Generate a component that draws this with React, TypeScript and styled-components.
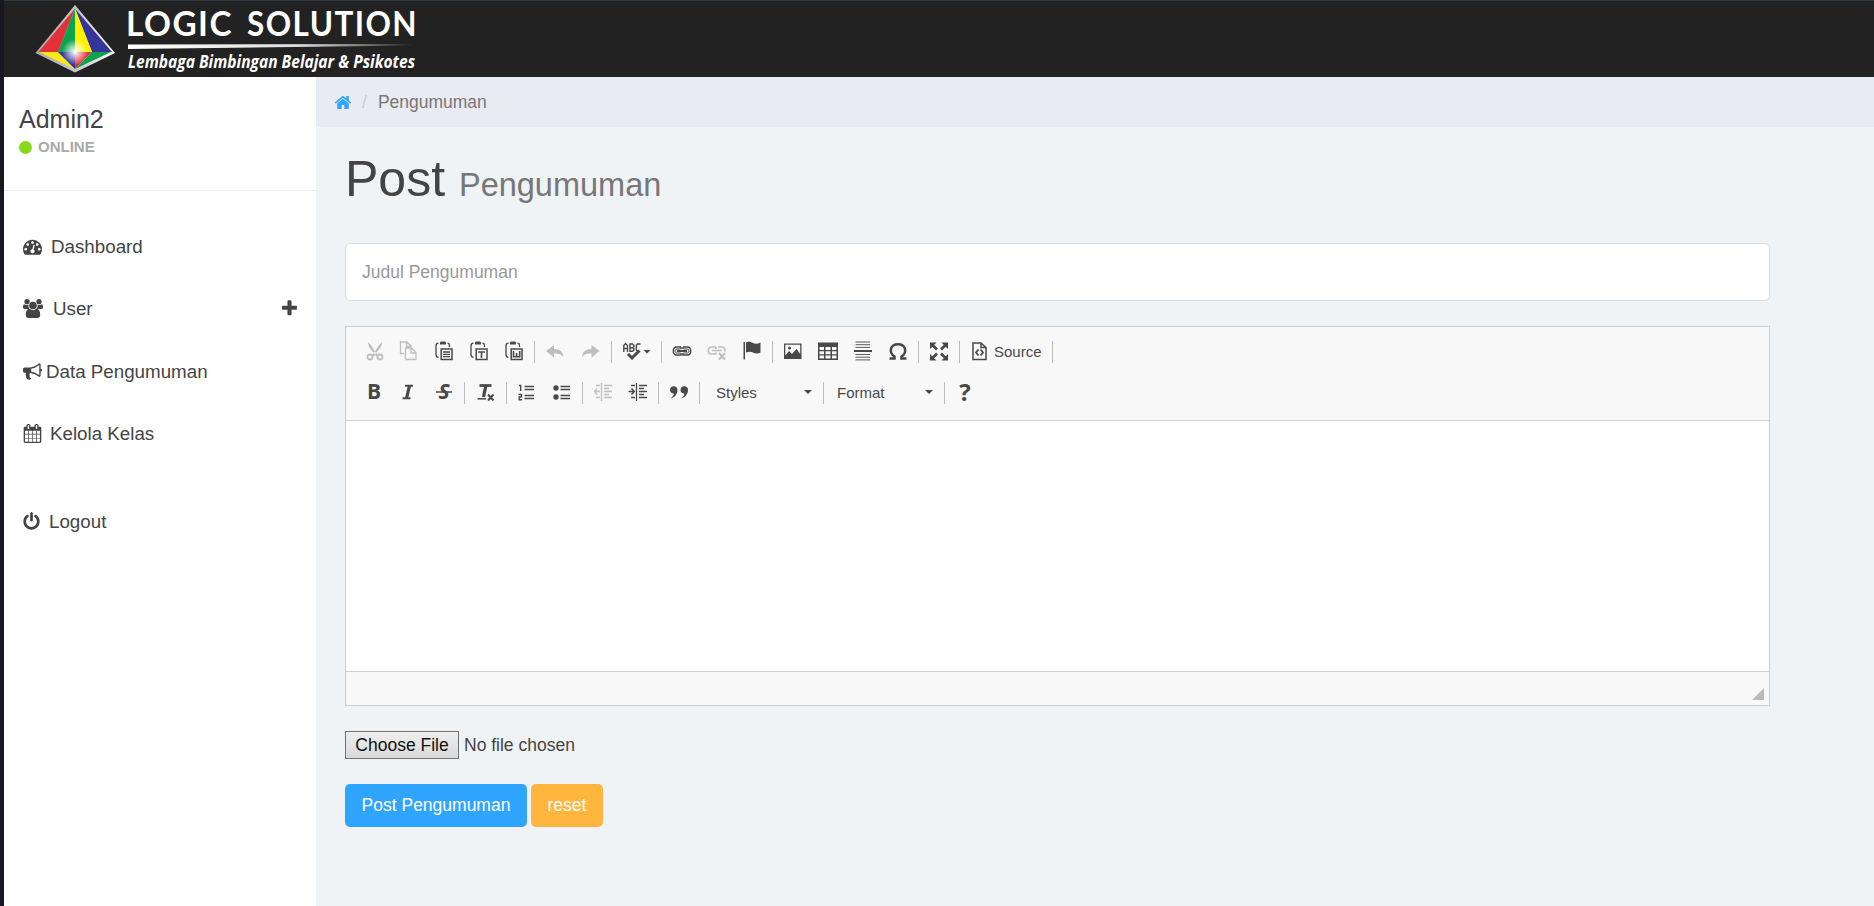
import React from 'react';
import styled, { createGlobalStyle } from 'styled-components';

const Global = createGlobalStyle`
  * { box-sizing: border-box; }
  body {
    margin: 0;
    background: #f0f3f6;
    color: #444444;
    font-family: "Liberation Sans", Arial, sans-serif;
    font-size: 17.5px;
    line-height: 25px;
  }
`;

const Page = styled.div`
  display: flex;
  flex-direction: column;
  height: 906px;
  border-left: 4px solid #16181d;
  overflow: hidden;
`;

const Header = styled.header`
  height: 77px;
  flex: none;
  background: #222222;
  border-top: 1px solid #2c3a45;
`;

const Logo = styled.svg`
  display: block;
  width: 436px;
  height: 76px;
`;

const Body = styled.div`
  display: flex;
  flex: 1;
  min-height: 0;
`;

const Sidebar = styled.aside`
  width: 312px;
  flex: none;
  background: #ffffff;
`;

const Profile = styled.div`
  height: 114px;
  padding: 27px 15px 0;
  border-bottom: 1px solid #e9ecf2;
`;

const UserName = styled.div`
  font-size: 25px;
  line-height: 30px;
`;

const Status = styled.div`
  display: flex;
  align-items: center;
  gap: 6px;
  margin-top: 1px;
  font-size: 15px;
  line-height: 24px;
  font-weight: bold;
  color: #a9a9a9;
`;

const Dot = styled.span`
  width: 13px;
  height: 13px;
  border-radius: 50%;
  background: #8ad919;
`;

const Menu = styled.nav`
  display: flex;
  flex-direction: column;
  padding-top: 24px;
`;

const MenuItem = styled.a<{ $gap: number; $offset?: number }>`
  display: flex;
  align-items: center;
  height: 62.5px;
  padding: 0 17px 0 19px;
  margin-top: ${(p) => p.$offset ?? 0}px;
  font-size: 18.75px;
  svg:first-child { margin-right: ${(p) => p.$gap}px; }
`;

const MenuLabel = styled.span`
  flex: 1;
`;

const Glyph = styled.svg<{ $w: number; $h?: number }>`
  width: ${(p) => p.$w}px;
  height: ${(p) => p.$h ?? p.$w}px;
  flex: none;
  fill: currentColor;
  overflow: visible;
`;

const Main = styled.main`
  flex: 1;
  min-width: 0;
`;

const Breadcrumb = styled.div`
  display: flex;
  align-items: center;
  height: 50px;
  padding-left: 18px;
  background: #e8ebf2;
  color: #777777;
`;

const HomeLink = styled.a`
  display: flex;
  color: #30a5ff;
`;

const Slash = styled.span`
  margin: 0 11px 0 10px;
  color: #cccccc;
`;

const Content = styled.div`
  width: 1425px;
  margin-left: 29px;
`;

const Title = styled.h1`
  margin: 25px 0 0;
  height: 91px;
  font-size: 50px;
  line-height: 55px;
  font-weight: normal;
`;

const Subtitle = styled.small`
  font-size: 32.5px;
  color: #777777;
`;

const TitleInput = styled.input`
  display: block;
  width: 100%;
  height: 58px;
  padding: 0 16px;
  border: 1px solid #dddddd;
  border-radius: 5px;
  background: #ffffff;
  font: inherit;
  outline: none;
  &::placeholder { color: #999999; opacity: 1; }
`;

const Editor = styled.section`
  display: flex;
  flex-direction: column;
  height: 380px;
  margin-top: 25px;
  border: 1px solid #cacdd1;
  background: #ffffff;
`;

const Toolbar = styled.div`
  height: 94px;
  padding: 7px 11px 0;
  background: #f8f8f8;
  border-bottom: 1px solid #d1d1d1;
`;

const ToolRow = styled.div`
  display: flex;
  align-items: center;
  height: 35px;
  margin-bottom: 6px;
`;

const Tool = styled.span<{ $w?: number; $off?: boolean }>`
  display: flex;
  align-items: center;
  justify-content: center;
  width: ${(p) => p.$w ?? 35}px;
  height: 35px;
  padding: 0 1px 1px 0;
  color: #484848;
  opacity: ${(p) => (p.$off ? 0.32 : 1)};
`;

const SourceTool = styled(Tool)`
  justify-content: flex-start;
  padding-left: 7px;
  gap: 4px;
  font-size: 15px;
`;

const Combo = styled(Tool)<{ $pad?: number }>`
  justify-content: space-between;
  padding: 0 9px 1px ${(p) => p.$pad ?? 13}px;
  font-size: 15px;
`;

const Separator = styled.span`
  width: 1px;
  height: 22px;
  margin: 0 3px 0 2px;
  background: #bcbcbc;
`;

const Caret = styled.span`
  border: 4px solid transparent;
  border-top-color: #484848;
  border-bottom: 0;
`;

const EditArea = styled.div`
  flex: 1;
`;

const EditorFooter = styled.div`
  display: flex;
  justify-content: flex-end;
  align-items: flex-end;
  height: 34px;
  padding: 0 5px 5px;
  border-top: 1px solid #d1d1d1;
  background: #f8f8f8;
`;

const Resizer = styled.span`
  border: 6px solid #bababa;
  border-top-color: transparent;
  border-left-color: transparent;
`;

const FileRow = styled.div`
  display: flex;
  align-items: center;
  gap: 5px;
  margin-top: 25px;
`;

const FileButton = styled.button`
  width: 114px;
  height: 28px;
  padding: 0;
  border: 1px solid #707070;
  background: linear-gradient(#efefef, #d9d9d9);
  font: inherit;
  line-height: 24px;
  color: #111111;
`;

const Actions = styled.div`
  display: flex;
  gap: 4px;
  margin-top: 25px;
`;

const ActionButton = styled.button<{ $w: number; $bg: string }>`
  width: ${(p) => p.$w}px;
  height: 43px;
  padding: 0 0 1px;
  border: 0;
  border-radius: 5px;
  background: ${(p) => p.$bg};
  color: #ffffff;
  font: inherit;
`;

const fa = {
  dashboard:
    'M384 1152q0-53-37.5-90.5t-90.5-37.5-90.5 37.5-37.5 90.5 37.5 90.5 90.5 37.5 90.5-37.5 37.5-90.5zm192-448q0-53-37.5-90.5t-90.5-37.5-90.5 37.5-37.5 90.5 37.5 90.5 90.5 37.5 90.5-37.5 37.5-90.5zm428 481l101-382q6-26-7.5-48.5t-38.5-29.5-48 6.5-30 39.5l-101 382q-60 5-107 43.5t-63 98.5q-20 77 20 146t117 89 146-20 89-117q16-60-6-117t-72-91zm660-33q0-53-37.5-90.5t-90.5-37.5-90.5 37.5-37.5 90.5 37.5 90.5 90.5 37.5 90.5-37.5 37.5-90.5zm-640-640q0-53-37.5-90.5t-90.5-37.5-90.5 37.5-37.5 90.5 37.5 90.5 90.5 37.5 90.5-37.5 37.5-90.5zm448 192q0-53-37.5-90.5t-90.5-37.5-90.5 37.5-37.5 90.5 37.5 90.5 90.5 37.5 90.5-37.5 37.5-90.5zm320 448q0 261-141 483-19 29-54 29h-1402q-35 0-54-29-141-221-141-483 0-182 71-348t191-286 286-191 348-71 348 71 286 191 191 286 71 348z',
  bullhorn:
    'M1664 640q53 0 90.5 37.5t37.5 90.5-37.5 90.5-90.5 37.5v384q0 52-38 90t-90 38q-417-347-812-380-58 19-91 66t-31 100.5 40 92.5q-20 33-23 65.5t6 58 33.5 55 48 50 61.5 50.5q-29 58-111.5 83t-168.5 11.5-132-55.5q-7-23-29.5-87.5t-32-94.5-23-89-15-101 3.5-98.5 22-110.5h-122q-66 0-113-47t-47-113v-192q0-66 47-113t113-47h480q435 0 896-384 52 0 90 38t38 90v384zm-128 604v-954q-394 302-768 343v270q377 42 768 341z',
  calendar:
    'M192 1664h288v-288h-288v288zm352 0h320v-288h-320v288zm-352-352h288v-320h-288v320zm352 0h320v-320h-320v320zm-352-384h288v-288h-288v288zm736 736h320v-288h-320v288zm-384-736h320v-288h-320v288zm768 736h288v-288h-288v288zm-384-352h320v-320h-320v320zm-352-864v-288q0-13-9.5-22.5t-22.5-9.5h-64q-13 0-22.5 9.5t-9.5 22.5v288q0 13 9.5 22.5t22.5 9.5h64q13 0 22.5-9.5t9.5-22.5zm736 864h288v-320h-288v320zm-384-384h320v-288h-320v288zm384 0h288v-288h-288v288zm32-480v-288q0-13-9.5-22.5t-22.5-9.5h-64q-13 0-22.5 9.5t-9.5 22.5v288q0 13 9.5 22.5t22.5 9.5h64q13 0 22.5-9.5t9.5-22.5zm384-64v1280q0 52-38 90t-90 38h-1408q-52 0-90-38t-38-90v-1280q0-52 38-90t90-38h128v-96q0-66 47-113t113-47h64q66 0 113 47t47 113v96h384v-96q0-66 47-113t113-47h64q66 0 113 47t47 113v96h128q52 0 90 38t38 90z',
  power:
    'M1664 896q0 156-61 298t-164 245-245 164-298 61-298-61-245-164-164-245-61-298q0-182 80.5-343t226.5-270q43-32 95.5-25t83.5 50q32 42 24.5 94.5t-49.5 84.5q-98 74-151.5 181t-53.5 228q0 104 40.5 198.5t109.5 163.5 163.5 109.5 198.5 40.5 198.5-40.5 163.5-109.5 109.5-163.5 40.5-198.5q0-121-53.5-228t-151.5-181q-42-32-49.5-84.5t24.5-94.5q31-43 84-50t95 25q146 109 226.5 270t80.5 343zm-640-768v640q0 52-38 90t-90 38-90-38-38-90v-640q0-52 38-90t90-38 90 38 38 90z',
  plus:
    'M1600 736v192q0 40-28 68t-68 28h-416v416q0 40-28 68t-68 28h-192q-40 0-68-28t-28-68v-416h-416q-40 0-68-28t-28-68v-192q0-40 28-68t68-28h416v-416q0-40 28-68t68-28h192q40 0 68 28t28 68v416h416q40 0 68 28t28 68z',
  home:
    'M1472 992v480q0 26-19 45t-45 19h-384v-384h-256v384h-384q-26 0-45-19t-19-45v-480q0-1 .5-3t.5-3l575-474 575 474q1 2 1 6zm223-69l-62 74q-8 9-21 11h-3q-13 0-21-7l-692-577-692 577q-12 8-24 7-13-2-21-11l-62-74q-8-10-7-23.5t11-21.5l719-599q32-26 76-26t76 26l244 204v-195q0-14 9-23t23-9h192q14 0 23 9t9 23v408l219 182q10 8 11 21.5t-7 23.5z',
};

const Users = () => (
  <Glyph $w={20} $h={19} viewBox="0 0 20 19">
    <circle cx="4" cy="2.7" r="2.6" />
    <circle cx="16" cy="2.7" r="2.6" />
    <path d="M0 8.3c0-2.4.8-3.4 1.6-2.9 1.4.9 2.8.8 4 .4-.5 1.7 0 3.200 1 4.200H1.800C.6 10 0 9.300 0 8.300zM20 8.300c0-2.400-.8-3.400-1.600-2.900-1.400.9-2.800.8-4 .4.5 1.700 0 3.200-1 4.200h4.800c1.200 0 1.800-.7 1.800-1.700z" />
    <circle cx="10" cy="6.500" r="3.800" />
    <path d="M2.800 16c0-4 1.400-6.200 3.800-6.200 2.200 1.900 4.600 1.900 6.800 0 2.400 0 3.800 2.200 3.800 6.200 0 2-1.200 3-2.800 3H5.600c-1.600 0-2.800-1-2.800-3z" />
  </Glyph>
);

const Ico = ({ children, w = 20 }: { children: React.ReactNode; w?: number }) => (
  <Glyph $w={w} $h={20} viewBox={`0 0 ${w} 20`}>{children}</Glyph>
);

const Clipboard = ({ children }: { children: React.ReactNode }) => (
  <Ico>
    <path d="M6 1.500C6 .8 7 .5 8 .5h2c1 0 2 .3 2 1V3.500H6z" />
    <path d="M4.500 2.200C2.500 2.200 2 3 2 5v8.500c0 2 .5 2.800 2.500 2.800M13.500 2.200c1.500 0 2 .8 2 2.800v1" fill="none" stroke="currentColor" strokeWidth="1.300" />
    <rect x="7.200" y="8" width="10.800" height="10.500" fill="none" stroke="currentColor" strokeWidth="1.500" />
    {children}
  </Ico>
);

const Line = ({ d, w = 1.300 }: { d: string; w?: number }) => (
  <path d={d} fill="none" stroke="currentColor" strokeWidth={w} />
);

const LetterIco = ({ t, italic, size = 20, y = 17 }: { t: string; italic?: boolean; size?: number; y?: number }) => (
  <text x="10" y={y} textAnchor="middle" fontFamily="Open Sans" fontWeight="bold" fontStyle={italic ? 'italic' : 'normal'} fontSize={size}>{t}</text>
);

const Brand = () => (
  <Logo viewBox="4 1 436 76">
    <defs>
      <radialGradient id="glow"><stop offset="0" stopColor="#fff" /><stop offset=".25" stopColor="#fff" stopOpacity=".75" /><stop offset="1" stopColor="#fff" stopOpacity="0" /></radialGradient>
      <linearGradient id="edge"><stop offset="0" stopColor="#a9a9a9" /><stop offset=".5" stopColor="#c4c4c4" /><stop offset="1" stopColor="#fff" /></linearGradient>
      <linearGradient id="rule"><stop offset="0" stopColor="#fff" /><stop offset=".6" stopColor="#ddd" /><stop offset="1" stopColor="#fff" stopOpacity="0" /></linearGradient>
    </defs>
    <path d="M75 5L115 53L75 72.500L35.500 53Z" fill="url(#edge)" />
    <path d="M75 8.500L38.500 52H58Z" fill="#e5303a" />
    <path d="M75 8.500L112 52H92Z" fill="#34349a" />
    <path d="M75 8.500L58 52L75 53Z" fill="#0ba34e" />
    <path d="M75 8.500L92 52L75 53Z" fill="#fff200" />
    <path d="M39 52H58L75 69Z" fill="#fbe916" />
    <path d="M58 52H75V69Z" fill="#34349a" />
    <path d="M75 52H92L75 69Z" fill="#e5303a" />
    <path d="M92 52H111L75 69Z" fill="#0ba34e" />
    <circle cx="75" cy="52" r="13" fill="url(#glow)" />
    <text x="126" y="36" textLength="107" lengthAdjust="spacingAndGlyphs" letterSpacing="1.500" fontFamily="Lato" fontWeight="bold" fontSize="33.500" fill="#fff">LOGIC</text>
    <text x="247" y="36" textLength="171" lengthAdjust="spacingAndGlyphs" letterSpacing="1.500" fontFamily="Lato" fontWeight="bold" fontSize="33.500" fill="#fff">SOLUTION</text>
    <path d="M128 44.500L412 44V45.500L128 49Z" fill="url(#rule)" />
    <text x="128" y="68" textLength="287" lengthAdjust="spacingAndGlyphs" fontFamily="Open Sans" fontWeight="bold" fontStyle="italic" fontSize="17" fill="#fff">Lembaga Bimbingan Belajar &amp; Psikotes</text>
  </Logo>
);

const Fa = ({ d, w, box = '0 0 1792 1792' }: { d: string; w: number; box?: string }) => (
  <Glyph $w={w} $h={19} viewBox={box}><path d={d} /></Glyph>
);

const indentLines = 'M8.500 1V19M11 3.500H19M11 6.500H16M11 9.500H19M11 12.500H16M11 15.500H19M3 3.500H7M3 15.500H7';

export default function App() {
  return (
    <Page>
      <Global />
      <Header><Brand /></Header>
      <Body>
        <Sidebar>
          <Profile>
            <UserName>Admin2</UserName>
            <Status><Dot />ONLINE</Status>
          </Profile>
          <Menu>
            <MenuItem $gap={9}><Fa d={fa.dashboard} w={19} /><MenuLabel>Dashboard</MenuLabel></MenuItem>
            <MenuItem $gap={10}><Users /><MenuLabel>User</MenuLabel><Fa d={fa.plus} w={19} /></MenuItem>
            <MenuItem $gap={4}><Fa d={fa.bullhorn} w={19} /><MenuLabel>Data Pengumuman</MenuLabel></MenuItem>
            <MenuItem $gap={8}><Fa d={fa.calendar} w={19} /><MenuLabel>Kelola Kelas</MenuLabel></MenuItem>
            <MenuItem $gap={9} $offset={25}><Fa d={fa.power} w={17} box="128 0 1536 1792" /><MenuLabel>Logout</MenuLabel></MenuItem>
          </Menu>
        </Sidebar>
        <Main>
          <Breadcrumb>
            <HomeLink><Fa d={fa.home} w={18} /></HomeLink>
            <Slash>/</Slash>Pengumuman
          </Breadcrumb>
          <Content>
            <Title>Post <Subtitle>Pengumuman</Subtitle></Title>
            <TitleInput placeholder="Judul Pengumuman" />
            <Editor>
              <Toolbar>
                <ToolRow>
                  <Tool $off><Ico><path d="M4 1C7.500 4 9.500 8 11 10.500L14 14L12 15.500L10 12C7.500 9 4 6 4 1zM18 1C14.500 4 12.500 8 11 10.500L8 14L10 15.500L12 12C14.500 9 18 6 18 1z" /><circle cx="6" cy="16" r="2.500" fill="none" stroke="currentColor" strokeWidth="1.800" /><circle cx="16" cy="16" r="2.500" fill="none" stroke="currentColor" strokeWidth="1.800" /></Ico></Tool>
                  <Tool $off><Ico><Line d="M5 12.500H1.500V1H8L12 5V6M7.500 1V5.500H12M6.500 7H12.500L17 11.500V18.500H6.500ZM12 7V12H17" /></Ico></Tool>
                  <Tool><Clipboard><Line d="M9 11H16M9 13.300H16M9 15.600H16" /></Clipboard></Tool>
                  <Tool><Clipboard><Line d="M9 11H16M12.500 11V17" w={1.600} /></Clipboard></Tool>
                  <Tool><Clipboard><Line d="M9.500 10V15.800H12.600V12M12.600 15.800H15.700V10" w={1.600} /></Clipboard></Tool>
                  <Separator />
                  <Tool $off><Ico><path d="M1 10L9 4V8C14 8 18 10 18.500 16C16 13 13 12 9 12.500V16.500Z" /></Ico></Tool>
                  <Tool $off $w={36}><Ico><path d="M18.500 10L10.500 4V8C5.500 8 1.500 10 1 16C3.500 13 6.500 12 10.500 12.500V16.500Z" /></Ico></Tool>
                  <Separator />
                  <Tool $w={44}><Ico w={28}>
                    <Line d="M.8 11V4.500L2.500 2.500L4.500 4.500V11M.8 7.500H4.500M7 3H9.500L11 4.500V5.500L10 6.800L11 8V9L9.500 10.200H7ZM7 6.800H10M17.500 3H14.500L13.300 4.500V9L14.500 10.200H16" w={1.400} />
                    <Line d="M5 13L9 17L16.500 9.500" w={3} />
                    <path d="M20.500 9H27.500L24 12.500Z" />
                  </Ico></Tool>
                  <Separator />
                  <Tool><Ico><Line d="M9 6H4.500C.3 6 .3 14 4.500 14H9V12M9 8V6M11 6H15.500C19.700 6 19.700 14 15.500 14H11V12M11 8V6" w={1.500} /><Line d="M8.500 8H5C2.500 8 2.500 12 5 12H8.500M11.500 8H15C17.500 8 17.500 12 15 12H11.500" w={1} /><Line d="M5 10H15" w={2} /></Ico></Tool>
                  <Tool $off><Ico><Line d="M9 6H4.500C.3 6 .3 13 4.500 13H9V11.500M9 8V6M11 6H15C18 6 18.500 8.500 17.500 10.500M5 9.500H15" w={1.700} /><Line d="M12 12L18 18.500M18 12L12 18.500" w={2} /></Ico></Tool>
                  <Tool><Ico><path d="M1.500 1H3V18.500H1.500zM4 1.500C7 0 9 1 11 2C13 3 15.500 3 18.500 1.500V11.500C15.500 13 13 12.500 11 11.500C9 10.500 7 10.500 4 11.500z" /></Ico></Tool>
                  <Separator />
                  <Tool><Ico><path fillRule="evenodd" d="M1 2.500H18.500V18H1zM2.300 3.800V14.500L6 10L9 13L13.500 8L17.200 13V3.800z" /><circle cx="6.500" cy="7" r="1.500" /></Ico></Tool>
                  <Tool><Ico><path fillRule="evenodd" d="M0 1.500H20V19H0zM1.500 6V9H6V6zM7.500 6V9H12.500V6zM14 6V9H18.500V6zM1.500 10.300V13.200H6V10.300zM7.500 10.300V13.200H12.500V10.300zM14 10.300V13.200H18.500V10.300zM1.500 14.600V17.500H6V14.600zM7.500 14.600V17.500H12.500V14.600zM14 14.600V17.500H18.500V14.600z" /></Ico></Tool>
                  <Tool><Ico><Line d="M2.500 1H17M2.500 3.700H17M2.500 6.400H17M2.500 13.500H17M2.500 16.200H17M2.500 18.900H17" w={0.900} /><Line d="M1 10H19" w={2} /></Ico></Tool>
                  <Tool><Ico><Line d="M1.500 17.500H6.500V15.500C.5 11.500 2 3.200 10 3.200S19.500 11.500 13.500 15.500V17.500H18.500" w={2.500} /></Ico></Tool>
                  <Separator />
                  <Tool><Ico><path d="M1 1.500H7.500L1 8zM19 1.500H12.500L19 8zM1 19.500H7.500L1 13zM19 19.500H12.500L19 13z" /><Line d="M3 3.500L8 8.500M17 3.500L12 8.500M3 17.500L8 12.500M17 17.500L12 12.500" w={2.700} /></Ico></Tool>
                  <Separator />
                  <SourceTool $w={87}><Ico><Line d="M3 2H11L16 6.500V18.500H3ZM11 2V6.500H16" w={1.500} /><Line d="M8.500 8.500L6 11.500L8.500 14.500M10.500 8.500L13 11.500L10.500 14.500" w={1.800} /></Ico>Source</SourceTool>
                  <Separator />
                </ToolRow>
                <ToolRow>
                  <Tool><Ico><LetterIco t="B" size={21} /></Ico></Tool>
                  <Tool><Ico><Line d="M6 3.800H14M3.500 16.200H11.500" w={2} /><Line d="M10.500 3.500L7.500 16.500" w={3.200} /></Ico></Tool>
                  <Tool><Ico><LetterIco t="S" italic size={21} /><Line d="M2 10H18" w={1.500} /></Ico></Tool>
                  <Separator />
                  <Tool $w={36}><Ico><Line d="M3.500 3.500H15.500" w={2.700} /><Line d="M10 3L7.500 15" w={3.200} /><Line d="M1.500 16.800H10" w={1.500} /><Line d="M12 12.500L17.500 18.500M17.500 12.500L12 18.500" w={2} /></Ico></Tool>
                  <Separator />
                  <Tool><Ico><Line d="M2 3.500H3.700V9M1.500 12.500H4.500V15H2.200V17.800H5" w={1.400} /><Line d="M7.500 4.500H17M7.500 7.500H17M7.500 13.500H17M7.500 16.500H17" w={1.400} /></Ico></Tool>
                  <Tool><Ico><circle cx="4" cy="6" r="2.700" /><circle cx="4" cy="15" r="2.700" /><Line d="M8.500 4.500H18M8.500 7.500H18M8.500 13.500H18M8.500 16.500H18" w={1.400} /></Ico></Tool>
                  <Separator />
                  <Tool $off><Ico><Line d={indentLines} /><Line d="M1.500 9.500H7M4 6.500L1.500 9.500L4 12.500" /></Ico></Tool>
                  <Tool><Ico><Line d={indentLines} /><Line d="M.5 9.500H6M3.500 6.500L6.300 9.500L3.500 12.500" w={1.600} /></Ico></Tool>
                  <Separator />
                  <Tool><Ico><path d="M8.500 7.500C8.500 12 6 15.500 1.500 16.500C4 14.500 5 12.500 4.800 11.500C2.500 11.500 1 10 1 8C1 5.700 2.500 4.200 4.800 4.200C7 4.200 8.500 5.500 8.500 7.500zM19 7.500C19 12 16.500 15.500 12 16.500C14.500 14.500 15.500 12.500 15.300 11.500C13 11.500 11.500 10 11.500 8C11.500 5.700 13 4.200 15.300 4.200C17.500 4.200 19 5.500 19 7.500z" /></Ico></Tool>
                  <Separator />
                  <Combo $w={118}>Styles<Caret /></Combo>
                  <Separator />
                  <Combo $w={115} $pad={10}>Format<Caret /></Combo>
                  <Separator />
                  <Tool><Ico><LetterIco t="?" size={24} y={18.500} /></Ico></Tool>
                </ToolRow>
              </Toolbar>
              <EditArea />
              <EditorFooter><Resizer /></EditorFooter>
            </Editor>
            <FileRow><FileButton>Choose File</FileButton>No file chosen</FileRow>
            <Actions>
              <ActionButton $w={182} $bg="#30a5ff">Post Pengumuman</ActionButton>
              <ActionButton $w={72} $bg="#ffb53e">reset</ActionButton>
            </Actions>
          </Content>
        </Main>
      </Body>
    </Page>
  );
}
